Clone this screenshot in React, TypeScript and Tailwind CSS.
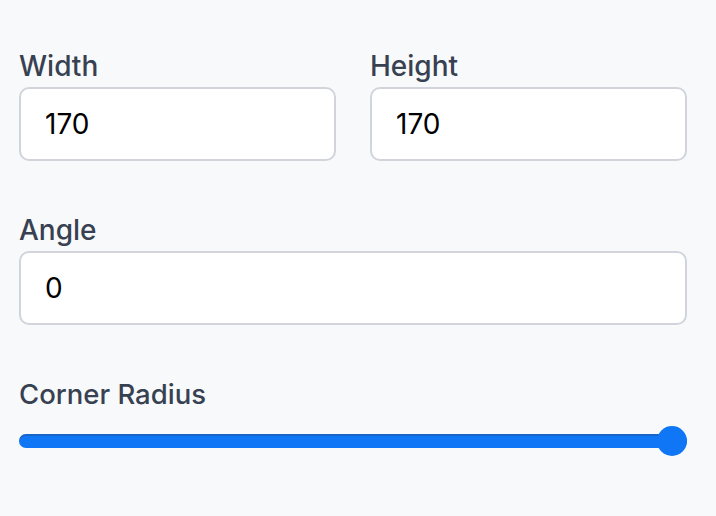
import * as React from "react"

function Field({ label, value }: { label: string; value: string }) {
  return (
    <div className="flex flex-col gap-[5px]">
      <label className="text-[28px] leading-[32px] font-medium text-[#374151]">{label}</label>
      <div className="h-[74px] rounded-[10px] border-2 border-[#d1d5db] bg-white flex items-center pl-[24px] text-[28px] text-black">
        {value}
      </div>
    </div>
  )
}

export default function App() {
  return (
    <div
      className="min-h-screen w-[716px] bg-[#f8f9fb] pl-[19px] pr-[29px] pt-[50px]"
      style={{ fontFamily: "Inter, 'Noto Sans', sans-serif" }}
    >
      <div className="grid grid-cols-2 gap-[34px]">
        <Field label="Width" value="170" />
        <Field label="Height" value="170" />
      </div>
      <div className="mt-[53px]">
        <Field label="Angle" value="0" />
      </div>
      <div className="mt-[53px] flex flex-col gap-[16px]">
        <label className="text-[27.5px] leading-[32px] font-medium text-[#374151]">Corner Radius</label>
        <div className="relative h-[30px] flex items-center">
          <div className="h-[14px] w-full rounded-full bg-[#0f77f5] shadow-[inset_0_2px_0_rgba(40,70,120,0.35)]" />
          <div className="absolute right-0 top-0 h-[30px] w-[30px] rounded-full bg-[#0f77f5]" />
        </div>
      </div>
    </div>
  )
}
